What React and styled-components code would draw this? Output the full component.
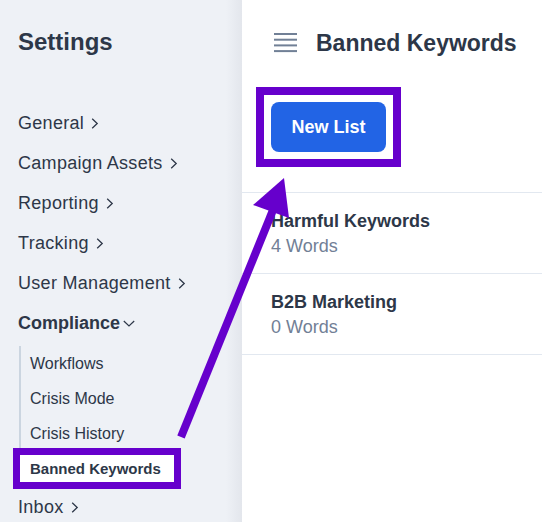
import React from 'react';
import styled, {createGlobalStyle} from 'styled-components';

const GlobalStyle = createGlobalStyle`
  body {
    margin: 0;
    font-family: "Liberation Sans", Arial, sans-serif;
    color: #2d3748;
    background: #fff;
  }
`;

const Page = styled.div`
  position: relative;
  display: flex;
  width: 542px;
  height: 522px;
  overflow: hidden;
`;

const Sidebar = styled.nav`
  width: 242px;
  flex-shrink: 0;
  box-sizing: border-box;
  padding: 28px 0 0 18px;
  background: linear-gradient(to right, #eef1f6 0, #eef1f6 226px, #e3e6ec 242px);
`;

const SidebarTitle = styled.h1`
  margin: 0 0 47px;
  font-size: 24px;
  line-height: 28px;
  font-weight: 700;
  color: #2d3748;
`;

const NavItem = styled.div`
  font-size: 18px;
  line-height: 40px;
  letter-spacing: ${(props) => (props.open ? '0' : '0.3px')};
  font-weight: ${(props) => (props.open ? 700 : 400)};
  white-space: nowrap;
`;

const SubList = styled.div`
  margin: 3px 0 0 1px;
  border-left: 2px solid #cbd5e0;
  padding-left: 9px;
`;

const SubItem = styled.div`
  font-size: 16px;
  line-height: 35px;
  white-space: nowrap;
`;

// the purple frame is a screenshot annotation, drawn as an outline
const ActiveSubItem = styled.div`
  width: fit-content;
  margin: 4px 0 5px -10px;
  padding: 0 13px 0 10px;
  font-size: 15px;
  font-weight: 700;
  line-height: 27px;
  background: #fff;
  outline: 7px solid #6600cc;
  white-space: nowrap;
`;

const ChevronRight = styled.svg`
  width: 8px;
  height: 11px;
  margin-left: 7px;
  vertical-align: 0;
`;

const ChevronDown = styled.svg`
  width: 12px;
  height: 7px;
  margin-left: 3px;
  vertical-align: 2px;
`;

const Main = styled.main`
  flex: 1;
  background: #fff;
`;

const TopSection = styled.div`
  padding: 29px 0 33px 22px;
`;

const Header = styled.div`
  display: flex;
  align-items: center;
  gap: 19px;
  margin-left: 10px;
`;

const Title = styled.h2`
  margin: 0;
  font-size: 23px;
  line-height: 28px;
  font-weight: 700;
  color: #2d3748;
  white-space: nowrap;
`;

const ButtonFrame = styled.div`
  display: inline-block;
  margin-top: 38px;
  padding: 7px;
  outline: 8px solid #6600cc;
`;

const PrimaryButton = styled.button`
  display: block;
  width: 115px;
  height: 50px;
  border: none;
  border-radius: 8px;
  background: #2264e5;
  color: #fff;
  font-family: inherit;
  font-size: 18px;
  font-weight: 700;
  cursor: pointer;
`;

const ListRow = styled.div`
  padding: 16px 29px 14px;
  border-top: 1px solid #e2e8f0;
  line-height: 25px;
  font-size: 18px;
  &:last-child {
    border-bottom: 1px solid #e2e8f0;
  }
`;

const RowTitle = styled.div`
  font-weight: 700;
  color: #2d3748;
`;

const RowMeta = styled.div`
  color: #718096;
`;

const Overlay = styled.svg`
  position: absolute;
  top: 0;
  left: 0;
  pointer-events: none;
`;

const Right = () => (
  <ChevronRight viewBox="0 0 8 11">
    <polyline points="1.2,0.8 6.2,5.5 1.2,10.2" fill="none" stroke="#2d3748" strokeWidth="1.3" />
  </ChevronRight>
);

const Down = () => (
  <ChevronDown viewBox="0 0 12 7">
    <polyline points="0.8,1 6,6 11.2,1" fill="none" stroke="#2d3748" strokeWidth="1.2" />
  </ChevronDown>
);

const Hamburger = () => (
  <svg width="23" height="20" viewBox="0 0 23 20">
    {[1, 6.7, 12.4, 18.1].map((y) => (
      <rect key={y} x="0" y={y - 1} width="23" height="2" fill="#718096" />
    ))}
  </svg>
);

const navItems = ['General', 'Campaign Assets', 'Reporting', 'Tracking', 'User Management'];
const subItems = ['Workflows', 'Crisis Mode', 'Crisis History'];
const lists = [
  {name: 'Harmful Keywords', count: 4},
  {name: 'B2B Marketing', count: 0},
];

const App = () => {
  return (
    <Page>
      <GlobalStyle />
      <Sidebar>
        <SidebarTitle>Settings</SidebarTitle>
        {navItems.map((item) => (
          <NavItem key={item}>
            {item}<Right />
          </NavItem>
        ))}
        <NavItem open>
          Compliance<Down />
        </NavItem>
        <SubList>
          {subItems.map((item) => (
            <SubItem key={item}>{item}</SubItem>
          ))}
          <ActiveSubItem>Banned Keywords</ActiveSubItem>
        </SubList>
        <NavItem>
          Inbox<Right />
        </NavItem>
      </Sidebar>

      <Main>
        <TopSection>
          <Header>
            <Hamburger />
            <Title>Banned Keywords</Title>
          </Header>
          <ButtonFrame>
            <PrimaryButton>New List</PrimaryButton>
          </ButtonFrame>
        </TopSection>
        <div>
          {lists.map((list) => (
            <ListRow key={list.name}>
              <RowTitle>{list.name}</RowTitle>
              <RowMeta>{list.count} Words</RowMeta>
            </ListRow>
          ))}
        </div>
      </Main>

      {/* annotation arrow from the active menu item to the button */}
      <Overlay width="542" height="522" viewBox="0 0 542 522">
        <line x1="181" y1="437" x2="273" y2="210" stroke="#6600cc" strokeWidth="8" />
        <polygon points="284,178 253,205 289,218" fill="#6600cc" />
      </Overlay>
    </Page>
  );
};

export default App;
